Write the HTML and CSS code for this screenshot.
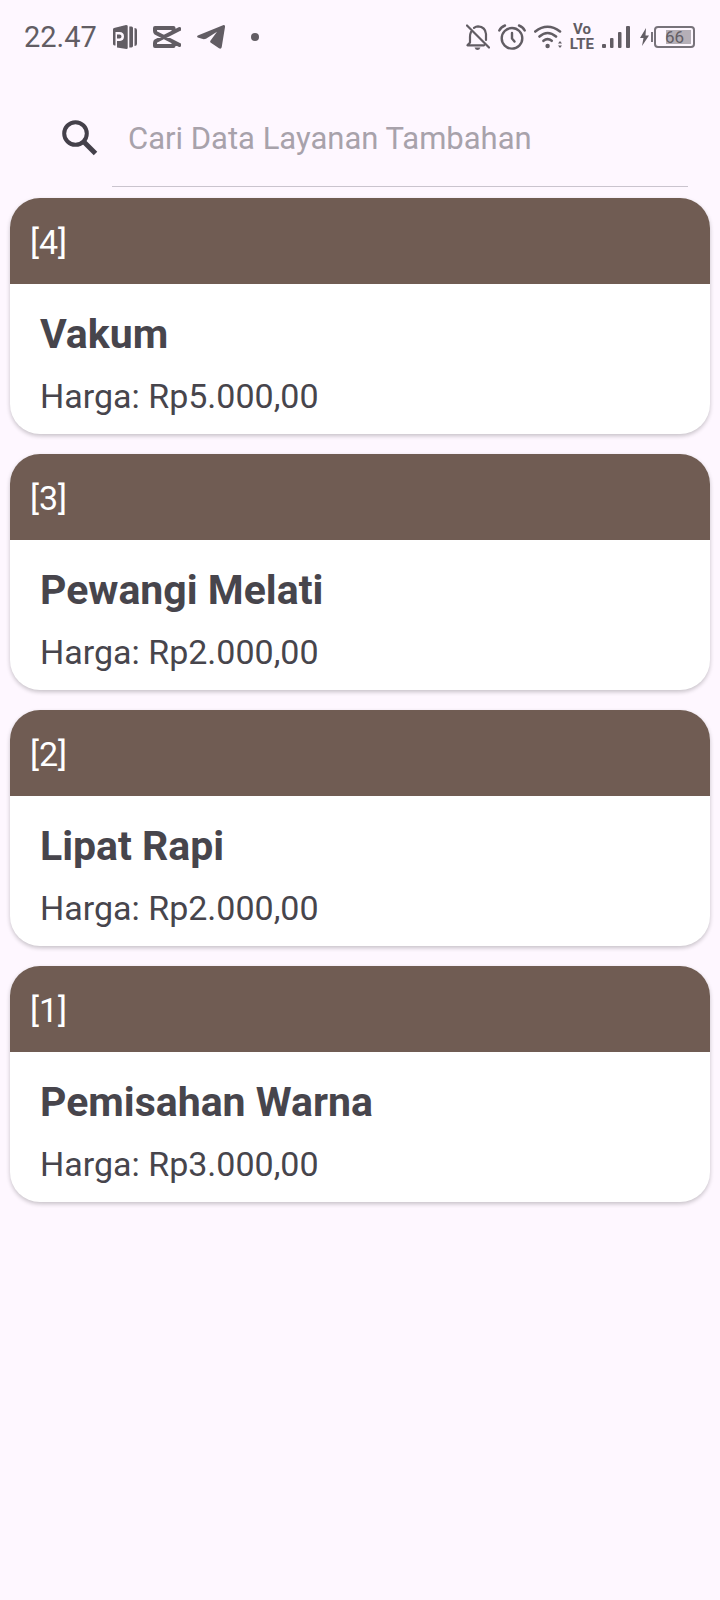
FILE: index.html
```html
<!DOCTYPE html>
<html lang="id">
<head>
<meta charset="utf-8">
<meta name="viewport" content="width=device-width, initial-scale=1">
<title>Layanan Tambahan</title>
<link rel="stylesheet" href="styles.css">
</head>
<body>
<header class="status">
  <div class="status-left">
    <time class="clock">22.47</time>
    <svg class="icon" width="24" height="24" viewBox="0 0 24 24" aria-hidden="true"><path fill-rule="evenodd" d="M0 4.500Q0 3.300 1 3L13 0Q14.700 0 14.700 1V23Q14.700 24 13.500 24L4 22.500V16H7Q11 15.500 11 11.500Q11 7 6.500 7H2.500V20.500H1.500Q0 20 0 19ZM4 9.500H6.500Q8.500 9.700 8.500 11.500Q8.500 13.300 6.500 13.500H4ZM16.300 1.500H18.500Q20 1.800 20 3V21Q20 22 18.500 22.500H16.300ZM21.500 3Q24 3.200 24 5V19Q24 21 21.500 21Z"/></svg>
    <svg class="icon" width="28" height="22" viewBox="0 0 28 22" aria-hidden="true"><path class="line" stroke-width="4" d="M26.500 3L3 15Q2 15.700 2 17V20H20.500V17.500M26.500 19L3 7Q2 6.300 2 5V2H20.500V4.500"/></svg>
    <svg class="icon" width="28" height="24" viewBox="0 0 28 24" aria-hidden="true"><path d="M.8 10.600L26 .2Q28.300-.3 28 2L24.700 22.300Q24 24.500 22 23.300L13.500 17.500Q12.800 16.500 13.600 15.500L20 6.700L9 13.700Q7 14.500 5 13.800L.7 12.500Q-.5 11.500.8 10.600Z"/></svg>
    <span class="dot"></span>
  </div>
  <div class="status-right">
    <svg class="icon" width="24" height="26" viewBox="0 0 24 26" aria-hidden="true"><path class="line" stroke-width="2.200" d="M1 1.500L23 23.500M5 8Q4 10 4 13V18.500L1.500 21.300H18M8 3.800Q10 2.300 12 2.300Q19.500 2.800 20 10V16"/><path d="M8.500 23.500H14.500Q13.500 26 11.500 26Q9.500 26 8.500 23.500Z"/></svg>
    <svg class="icon" width="28" height="26" viewBox="0 0 28 26" aria-hidden="true"><g class="line" stroke-width="2.400"><circle cx="14" cy="14.300" r="10.300"/><path d="M14 9V14.500L16.500 17.500M1.300 6.500Q3 2.800 7 1.500M26.700 6.500Q25 2.800 21 1.500"/></g></svg>
    <svg class="icon" width="28" height="24" viewBox="0 0 28 24" aria-hidden="true"><path class="line" stroke-width="2.600" d="M1.300 6.500Q13.500-3 26 6.500M5.500 11.500Q13.500 4.500 22 11.500M9.500 15.800Q13.500 12.500 17.700 15.800"/><circle cx="13.600" cy="21" r="2.200"/><path d="M24 18.500L26 16L28 18.500ZM24 20.500L26 23L28 20.500Z"/></svg>
    <span class="volte"><span>Vo</span><span>LTE</span></span>
    <svg class="icon" width="28" height="22" viewBox="0 0 28 22" aria-hidden="true"><rect y="18" width="4" height="4" rx="1"/><rect x="8" y="12" width="3.500" height="10" rx="1"/><rect x="16" y="6" width="3.500" height="16" rx="1"/><rect x="24" width="4" height="22" rx="1"/></svg>
    <span class="power">
      <svg class="icon" width="9" height="20" viewBox="0 0 9 20" aria-hidden="true"><path d="M6 1L0 11H3.500L2 19L9 8.500H5.500Z"/></svg>
      <span class="battery">66</span>
    </span>
  </div>
</header>
<main>
  <form class="search" role="search">
    <label class="search-label" for="q" aria-label="Cari"><svg width="36" height="36" viewBox="0 0 36 36" aria-hidden="true"><circle cx="13.500" cy="13.500" r="11.300" fill="none" stroke="currentColor" stroke-width="4"/><path d="M21.500 21.500L33.500 33.500" stroke="currentColor" stroke-width="5"/></svg></label>
    <input class="search-input" id="q" type="search" placeholder="Cari Data Layanan Tambahan">
  </form>
  <section class="list">
    <article class="card">
      <div class="card-head">[4]</div>
      <div class="card-body"><h2 class="name">Vakum</h2><p class="price">Harga: Rp5.000,00</p></div>
    </article>
    <article class="card">
      <div class="card-head">[3]</div>
      <div class="card-body"><h2 class="name">Pewangi Melati</h2><p class="price">Harga: Rp2.000,00</p></div>
    </article>
    <article class="card">
      <div class="card-head">[2]</div>
      <div class="card-body"><h2 class="name">Lipat Rapi</h2><p class="price">Harga: Rp2.000,00</p></div>
    </article>
    <article class="card">
      <div class="card-head">[1]</div>
      <div class="card-body"><h2 class="name">Pemisahan Warna</h2><p class="price">Harga: Rp3.000,00</p></div>
    </article>
  </section>
</main>
</body>
</html>
```
FILE: styles.css
```css
* { box-sizing: border-box; }
body {
  margin: 0;
  min-height: 100vh;
  background: #fef7ff;
  color: #47454c;
  font-family: Roboto, "Liberation Sans", sans-serif;
}
.status {
  display: flex;
  justify-content: space-between;
  height: 72px;
  padding: 1px 25px 0 24px;
  color: #625d64;
}
.status-left, .status-right { display: flex; align-items: center; }
.status-left { gap: 16px; }
.status-right { gap: 8px; }
.clock { font-size: 29px; line-height: 32px; }
.icon { display: block; flex: none; fill: currentColor; }
.line { fill: none; stroke: currentColor; stroke-linecap: round; stroke-linejoin: round; }
.dot { width: 8px; height: 8px; margin-left: 10px; border-radius: 50%; background: currentColor; }
.volte {
  display: flex;
  flex-direction: column;
  align-items: center;
  font-size: 15px;
  font-weight: 700;
  line-height: 15px;
}
.power { display: flex; align-items: center; gap: 5px; margin-left: 2px; }
.battery {
  position: relative;
  width: 41px;
  height: 22px;
  border: 2px solid #77727a;
  border-radius: 4px;
  background: linear-gradient(#b5afb7, #b5afb7) 10px 2px / 25px 14px no-repeat;
  font-size: 17px;
  line-height: 18px;
  text-align: center;
}
.battery::before {
  content: "";
  position: absolute;
  left: -5px;
  top: 4px;
  width: 2px;
  height: 10px;
  background: #77727a;
}
.search { display: flex; align-items: center; height: 126px; padding: 15px 32px 11px 62px; }
.search-label { display: flex; width: 50px; padding-top: 2px; color: #44404a; }
.search-input {
  flex: 1;
  min-width: 0;
  height: 100px;
  padding: 3px 16px 0;
  border: 0;
  border-bottom: 1px solid #cac4ce;
  border-radius: 0;
  outline: 0;
  background: transparent;
  color: #49454f;
  font: 31px/38px Roboto, "Liberation Sans", sans-serif;
  appearance: none;
}
.search-input::placeholder { color: #a8a2ab; opacity: 1; }
.list { display: flex; flex-direction: column; gap: 20px; padding: 0 10px 20px; }
.card {
  overflow: hidden;
  border-radius: 30px;
  background: #fff;
  box-shadow: 0 2px 4px rgba(0, 0, 0, .22);
}
.card-head { padding: 24px 20px 22px; background: #705c53; color: #fff; font-size: 34px; line-height: 40px; }
.card-body { padding: 26px 30px 18px; }
.name { margin: 0 0 18px; font-size: 41px; font-weight: 700; line-height: 48px; }
.price { margin: 0; font-size: 34px; line-height: 40px; }
```
